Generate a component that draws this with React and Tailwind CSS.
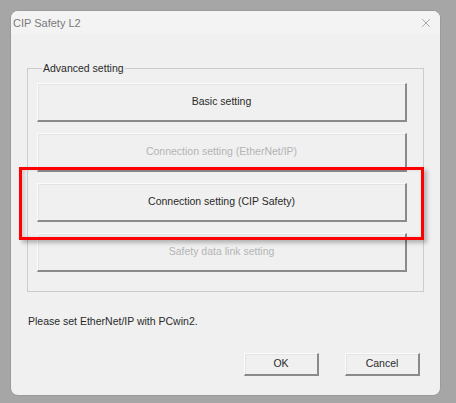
import { X } from 'lucide-react';

const font = { fontFamily: '"Liberation Sans", Arial, sans-serif' };

function BigButton({ label, disabled }) {
    return (
        <div
            className={`h-[39px] w-[370px] flex items-center justify-center bg-[#f0f0f0] border-t border-l border-[#fbfbfb] border-b-2 border-r-2 border-b-[#8a8a8a] border-r-[#8a8a8a] shadow-[inset_1px_1px_0_#e4e4e4] text-[10.5px] ${disabled ? 'text-[#b4b4b4]' : 'text-[#2a2a2a]'}`}
        >
            {label}
        </div>
    );
}

function SmallButton({ label }) {
    return (
        <div className="h-[23px] w-[75px] flex items-center justify-center bg-[#f0f0f0] border-t border-l border-[#fbfbfb] border-b-2 border-r-2 border-b-[#8a8a8a] border-r-[#8a8a8a] shadow-[inset_1px_1px_0_#e4e4e4] text-[10.5px] text-[#2a2a2a]">
            {label}
        </div>
    );
}

export default function App() {
    return (
        <div className="w-[456px] h-[403px] bg-[#a6a6a6] pl-[10px] pt-[10px]" style={font}>
            <div className="relative w-[431px] h-[386px] rounded-[8px] bg-[#f0f0f0] border border-[#9a9a9a] overflow-hidden">
                <div className="h-[23px] bg-[#f3f3f3] flex items-center justify-between pl-[2px] pr-[7px]">
                    <span className="text-[11px] text-[#7a7a7a] mt-[1px]">CIP Safety L2</span>
                    <X size={14} strokeWidth={1.1} className="text-[#7a7a7a]" />
                </div>

                <fieldset className="mt-[27px] ml-[16px] w-[397px] border border-[#cccccc] pl-[9px] pr-[15px] pt-[8px] pb-[19px]">
                    <legend className="ml-[5px] px-[1px] text-[10.5px] leading-[14px] text-[#2a2a2a]">Advanced setting</legend>
                    <div className="flex flex-col gap-[11px]">
                        <BigButton label="Basic setting" />
                        <BigButton label="Connection setting (EtherNet/IP)" disabled />
                        <BigButton label="Connection setting (CIP Safety)" />
                        <BigButton label="Safety data link setting" disabled />
                    </div>
                </fieldset>

                <div className="mt-[22px] pl-[17px] text-[10.5px] leading-[14px] text-[#2a2a2a]">
                    Please set EtherNet/IP with PCwin2.
                </div>

                <div className="mt-[25px] flex justify-end gap-[26px] pr-[20px]">
                    <SmallButton label="OK" />
                    <SmallButton label="Cancel" />
                </div>

                <div className="absolute left-[8px] top-[156px] w-[405px] h-[73px] border-[3px] border-[#ff0000] shadow-[3px_3px_4px_rgba(0,0,0,0.25),inset_3px_0_3px_rgba(0,0,0,0.12)]" />
            </div>
        </div>
    );
}
